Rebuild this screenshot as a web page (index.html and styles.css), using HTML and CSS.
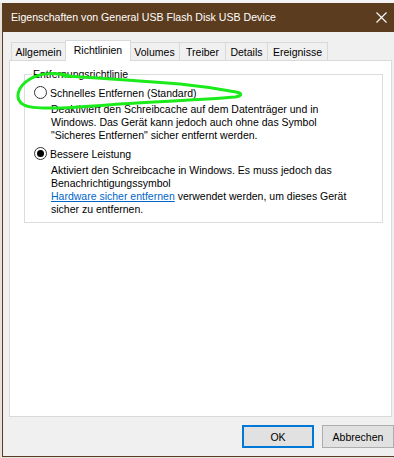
FILE: index.html
```html
<!DOCTYPE html>
<html lang="de">
<head>
<meta charset="utf-8">
<title>Eigenschaften</title>
<link rel="stylesheet" href="styles.css">
</head>
<body>
<div class="screen">
  <div class="strip"></div>
  <div class="window">
    <div class="titlebar">
      <span class="title">Eigenschaften von General USB Flash Disk USB Device</span>
      <svg class="close" width="11" height="11" viewBox="0 0 11 11"><path d="M0.5 0.5 L10.5 10.5 M10.5 0.5 L0.5 10.5" stroke="#fff" stroke-width="1.1" fill="none"/></svg>
    </div>
    <div class="body">
      <div class="tabs">
        <div class="tab t-allg">Allgemein</div>
        <div class="tab t-richt active">Richtlinien</div>
        <div class="tab t-vol">Volumes</div>
        <div class="tab t-trei">Treiber</div>
        <div class="tab t-det">Details</div>
        <div class="tab t-ereig">Ereignisse</div>
      </div>
      <div class="panel">
        <fieldset class="group">
          <legend>Entfernungsrichtlinie</legend>
          <div class="option">
            <span class="radio"></span>
            <span class="label">Schnelles Entfernen (Standard)</span>
          </div>
          <p class="desc">Deaktiviert den Schreibcache auf dem Datenträger und in<br>Windows. Das Gerät kann jedoch auch ohne das Symbol<br>"Sicheres Entfernen" sicher entfernt werden.</p>
          <div class="option second">
            <span class="radio checked"></span>
            <span class="label">Bessere Leistung</span>
          </div>
          <p class="desc">Aktiviert den Schreibcache in Windows. Es muss jedoch das<br>Benachrichtigungssymbol<br><a class="link" href="#">Hardware sicher entfernen</a> verwendet werden, um dieses Gerät<br>sicher zu entfernen.</p>
        </fieldset>
        <svg class="scribble" width="394" height="80" viewBox="0 0 394 80">
          <path d="M70 27 C 55 23 40 24 30 30 C 18 37 13 50 24 56 C 35 62 80 58 120 55 C 170 52 215 50 235 48 C 243 47 242 44 236 43 C 220 40 200 37 180 35 C 140 32 100 29 64 27" stroke="#1bea1b" stroke-width="3" fill="none" stroke-linecap="round" stroke-linejoin="round"/>
        </svg>
      </div>
      <div class="buttons">
        <button class="btn default">OK</button>
        <button class="btn">Abbrechen</button>
      </div>
    </div>
  </div>
</div>
</body>
</html>
```

FILE: styles.css
```css
html, body {
  margin: 0;
  padding: 0;
}
body {
  width: 394px;
  height: 458px;
  overflow: hidden;
  background: #ececec;
  font-family: "Liberation Sans", Arial, sans-serif;
  font-size: 10.5px;
  color: #000;
}
.screen {
  display: flex;
  height: 458px;
  box-sizing: border-box;
  padding-top: 3px;
  padding-bottom: 1px;
  background: linear-gradient(#f4f4f4, #f4f4f4) top/100% 3px no-repeat, #e4e4e4;
}
.strip {
  width: 2px;
  background: #e6e2dc;
}
.window {
  width: 392px;
  display: flex;
  flex-direction: column;
  border-left: 1px solid #5b3c1e;
  border-bottom: 1px solid #5b3c1e;
  background: #f0f0f0;
}
.titlebar {
  height: 29px;
  flex: none;
  background: #5b3c1e;
  color: #fff;
  display: flex;
  align-items: center;
  padding-left: 8px;
  padding-right: 7px;
}
.title {
  flex: 1;
  font-size: 10.6px;
  padding-bottom: 1px;
}
.close {
  display: block;
}
.body {
  flex: 1;
  display: flex;
  flex-direction: column;
  padding-top: 8px;
}
.tabs {
  display: flex;
  align-items: flex-end;
  margin-left: 8px;
  margin-bottom: -1px;
}
.tab {
  height: 18px;
  line-height: 18px;
  text-align: center;
  border: 1px solid #d9d9d9;
  border-bottom: 0;
  border-left-width: 0;
  background: #f0f0f0;
  margin-bottom: 1px;
  box-sizing: border-box;
}
.tab.t-allg { width: 55px; border-left-width: 1px; }
.tab.t-richt { width: 66px; }
.tab.t-vol { width: 50px; }
.tab.t-trei { width: 46px; }
.tab.t-det { width: 42px; }
.tab.t-ereig { width: 60px; }
.tab.active {
  height: 21px;
  line-height: 19px;
  background: #fff;
  border-left-width: 1px;
  margin: 0 -1px 0 -1px;
  position: relative;
  z-index: 1;
}
.panel {
  height: 357px;
  box-sizing: border-box;
  margin: 0 2px 0 6px;
  background: #fff;
  border: 1px solid #d9d9d9;
  position: relative;
  padding: 7px 8px 0 14px;
}
.group {
  margin: 0;
  border: 1px solid #dcdcdc;
  padding: 5px 8px 6px 9px;
  min-width: 0;
}
.group legend {
  padding: 0 1px;
  margin-left: -2px;
  line-height: 13px;
}
.option {
  display: flex;
  align-items: center;
  height: 13px;
}
.option.second {
  margin-top: 5px;
}
.radio {
  width: 11px;
  height: 11px;
  border: 1px solid #333;
  border-radius: 50%;
  background: #fff;
  display: flex;
  align-items: center;
  justify-content: center;
  margin-right: 3px;
}
.radio.checked::after {
  content: "";
  width: 7px;
  height: 7px;
  border-radius: 50%;
  background: #000;
}
.desc {
  margin: 4px 0 0 17px;
  line-height: 13px;
  white-space: nowrap;
}
.link {
  color: #0066cc;
  text-decoration: underline;
}
.scribble {
  position: absolute;
  left: -10px;
  top: -12px;
  pointer-events: none;
}
.buttons {
  display: flex;
  justify-content: flex-end;
  gap: 8px;
  padding-top: 8px;
}
.btn {
  font-family: inherit;
  font-size: 10.5px;
  width: 72px;
  height: 23px;
  background: #e1e1e1;
  border: 1px solid #adadad;
  color: #000;
  padding: 0;
  margin: 0;
}
.btn.default {
  border: 2px solid #0078d7;
}
```
